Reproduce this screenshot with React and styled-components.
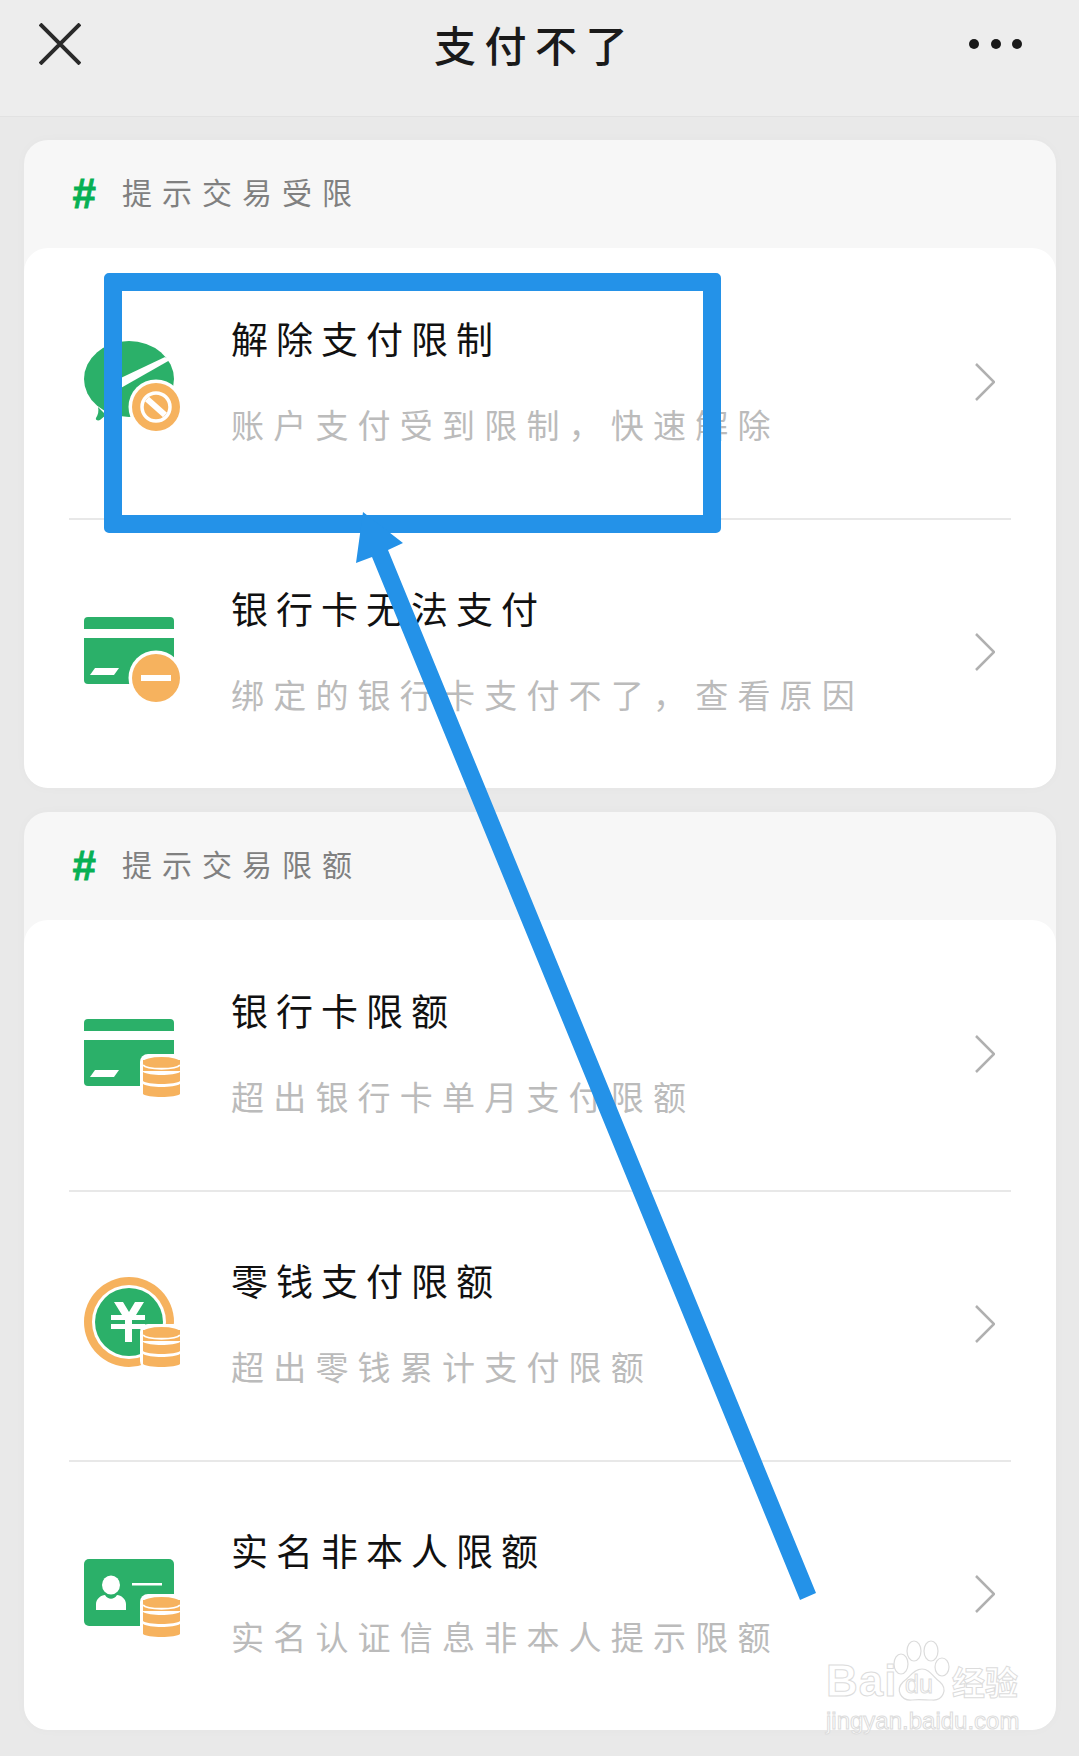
import React from "react";
import styled, { createGlobalStyle } from "styled-components";

const CJK = `"Noto Sans CJK SC", "Noto Sans", sans-serif`;
const GREEN = "#2bb069";
const ORANGE = "#f6b25e";
const BLUE = "#2492e8";

const Global = createGlobalStyle`
  html, body { margin: 0; padding: 0; background: #e9e9e9; }
  * { box-sizing: border-box; }
`;

const Page = styled.div`
  position: relative;
  width: 1079px;
  height: 1756px;
  overflow: hidden;
  background: #e9e9e9;
  font-family: ${CJK};
`;

const Header = styled.header`
  height: 117px;
  padding: 0 56px 29px 39px;
  display: flex;
  align-items: center;
  justify-content: space-between;
  background: #ededed;
  border-bottom: 1px solid #e2e2e2;
`;

const HeaderTitle = styled.h1`
  margin: 0 0 0 20px;
  font-size: 42px;
  line-height: 54px;
  font-weight: 500;
  letter-spacing: 8.5px;
  color: #1a1a1a;
`;

const Content = styled.main`
  padding: 23px 23px 0 24px;
  display: flex;
  flex-direction: column;
  gap: 24px;
`;

const Card = styled.section`
  background: #f7f7f7;
  border-radius: 24px;
  box-shadow: 0 0 12px rgba(0, 0, 0, 0.025);
  overflow: hidden;
`;

const SectionHead = styled.div`
  height: 108px;
  padding-left: 48px;
  display: flex;
  align-items: center;
`;

const Hash = styled.span`
  width: 50px;
  font-family: "Liberation Sans", sans-serif;
  font-size: 42px;
  font-weight: 700;
  font-style: italic;
  color: #07b053;
  -webkit-text-stroke: 0.8px #07b053;
`;

const SectionTitle = styled.span`
  padding-bottom: 6px;
  font-size: 30px;
  letter-spacing: 10px;
  color: #808080;
`;

const Rows = styled.div`
  background: #fff;
  border-radius: 24px;
`;

const Row = styled.div`
  height: 270px;
  margin: 0 45px;
  padding: ${(p) => (p.$first ? "0" : "0 0 2px")};
  padding-left: 13px;
  padding-right: 16px;
  display: flex;
  align-items: center;
  border-top: ${(p) => (p.$first ? "none" : "2px solid #e8e8e8")};
`;

const IconSvg = styled.svg`
  flex: none;
  width: 100px;
  height: 100px;
  display: block;
`;

const RowText = styled.div`
  flex: 1;
  margin-left: 49px;
  display: flex;
  flex-direction: column;
  gap: 40px;
  padding-bottom: 4px;
`;

const RowTitle = styled.div`
  font-size: 37px;
  line-height: 46px;
  letter-spacing: 8px;
  color: #111;
`;

const RowSub = styled.div`
  font-size: 33px;
  line-height: 46px;
  letter-spacing: 9.2px;
  color: #bbb;
`;

const Chevron = styled.svg`
  flex: none;
  width: 20px;
  height: 38px;
  margin-bottom: 2px;
  display: block;
`;

const Highlight = styled.div`
  position: absolute;
  left: 104px;
  top: 273px;
  width: 617px;
  height: 260px;
  border: 18px solid ${BLUE};
  border-radius: 5px;
`;

const ArrowSvg = styled.svg`
  position: absolute;
  left: 340px;
  top: 500px;
  width: 490px;
  height: 1110px;
`;

const Watermark = styled.div`
  position: absolute;
  left: 826px;
  top: 1640px;
  width: 200px;
  font-family: "Liberation Sans", sans-serif;
  color: rgba(255, 255, 255, 0.9);
  -webkit-text-stroke: 1px #dcdcdc;
`;

const MarkLine = styled.div`
  display: flex;
  align-items: flex-end;
  height: 62px;
`;

const MarkBai = styled.span`
  font-size: 44px;
  line-height: 42px;
  font-weight: 700;
  width: 66px;
  letter-spacing: 1px;
`;

const MarkPaw = styled.div`
  position: relative;
  width: 60px;
  height: 62px;
  flex: none;
`;

const MarkDu = styled.span`
  position: absolute;
  left: 13px;
  bottom: 4px;
  font-size: 25px;
  line-height: 28px;
`;

const MarkCn = styled.span`
  font-family: ${CJK};
  font-size: 33px;
  line-height: 42px;
  font-weight: 700;
`;

const MarkUrl = styled.div`
  margin-top: 6px;
  font-size: 24px;
  line-height: 26px;
  white-space: nowrap;
`;

const Coins = ({ y }) => (
  <g>
    <rect x="58" y={y - 3} width="42" height="45" rx="8" fill="#fff" />
    <rect x="61" y={y + 3} width="37" height="11" fill={ORANGE} />
    <ellipse cx="79.5" cy={y + 5} rx="18.5" ry="5" fill={ORANGE} />
    <path d={`M61 ${y + 8}c4 5 33 5 37 0`} fill="none" stroke="#fff" strokeWidth="2" />
    <path d={`M61 ${y + 15}v9c4 4 33 4 37 0v-9c-6 4-31 4-37 0z`} fill={ORANGE} />
    <path d={`M61 ${y + 27}v10c4 4 33 4 37 0v-10c-6 4-31 4-37 0z`} fill={ORANGE} />
  </g>
);

const Badge = ({ cy, children }) => (
  <g>
    <circle cx="74" cy={cy} r="27.5" fill="#fff" />
    <circle cx="74" cy={cy} r="24" fill={ORANGE} />
    {children}
  </g>
);

const CardShape = () => (
  <g fill={GREEN}>
    <path d="M2 26v-8a4 4 0 0 1 4-4h82a4 4 0 0 1 4 4v8z" />
    <path d="M2 35h90v46H6a4 4 0 0 1-4-4z" />
    <path d="M13 65h24l-5 7H8z" fill="#fff" />
  </g>
);

const BubbleIcon = () => (
  <IconSvg viewBox="0 0 100 100">
    <ellipse cx="47" cy="46" rx="45" ry="38" fill={GREEN} />
    <path d="M16 74c1 4 0 8-2 11-1 2 2 3 4 2l6-5z" fill={GREEN} />
    <path d="M83 24l5 3-58 33-6-8z" fill="#fff" />
    <Badge cy="74">
      <circle cx="74" cy="74" r="14" fill="none" stroke="#fff" strokeWidth="3.5" />
      <path d="M65 66l18 16" stroke="#fff" strokeWidth="6" />
    </Badge>
  </IconSvg>
);

const MinusCardIcon = () => (
  <IconSvg viewBox="0 0 100 100">
    <CardShape />
    <Badge cy="75">
      <rect x="59" y="72" width="30" height="6" fill="#fff" />
    </Badge>
  </IconSvg>
);

const CoinCardIcon = () => (
  <IconSvg viewBox="0 0 100 100">
    <CardShape />
    <Coins y={52} />
  </IconSvg>
);

const YenIcon = () => (
  <IconSvg viewBox="0 0 100 100">
    <circle cx="47" cy="47" r="45" fill={ORANGE} />
    <circle cx="47" cy="47" r="37" fill="#fff" />
    <circle cx="47" cy="47" r="34" fill={GREEN} />
    <path
      d="M32 27h9l6 10 6-10h9l-8 13h9v5H50v4h13v5H50v13h-7V54H29v-5h14v-4H29v-5h11z"
      fill="#fff"
    />
    <Coins y={52} />
  </IconSvg>
);

const PersonIcon = () => (
  <IconSvg viewBox="0 0 100 100">
    <rect x="2" y="14" width="90" height="67" rx="5" fill={GREEN} />
    <ellipse cx="29" cy="40" rx="9" ry="9.5" fill="#fff" />
    <path d="M14 65v-6c0-5 5-9 9-9 3 5 9 5 12 0 4 0 9 4 9 9v6z" fill="#fff" />
    <rect x="50" y="38" width="30" height="2.5" fill="#fff" />
    <Coins y={52} />
  </IconSvg>
);

const sections = [
  {
    title: "提示交易受限",
    rows: [
      { icon: BubbleIcon, title: "解除支付限制", sub: "账户支付受到限制，快速解除" },
      { icon: MinusCardIcon, title: "银行卡无法支付", sub: "绑定的银行卡支付不了，查看原因" },
    ],
  },
  {
    title: "提示交易限额",
    rows: [
      { icon: CoinCardIcon, title: "银行卡限额", sub: "超出银行卡单月支付限额" },
      { icon: YenIcon, title: "零钱支付限额", sub: "超出零钱累计支付限额" },
      { icon: PersonIcon, title: "实名非本人限额", sub: "实名认证信息非本人提示限额" },
    ],
  },
];

export default function App() {
  return (
    <Page>
      <Global />
      <Header>
        <svg width="42" height="42" viewBox="0 0 42 42">
          <path d="M1 1l40 40M41 1L1 41" stroke="#2a2a2a" strokeWidth="4" fill="none" />
        </svg>
        <HeaderTitle>支付不了</HeaderTitle>
        <svg width="54" height="12" viewBox="0 0 54 12">
          <circle cx="5" cy="6" r="5" fill="#1a1a1a" />
          <circle cx="27" cy="6" r="5" fill="#1a1a1a" />
          <circle cx="48" cy="6" r="5" fill="#1a1a1a" />
        </svg>
      </Header>
      <Content>
        {sections.map((s) => (
          <Card key={s.title}>
            <SectionHead>
              <Hash>#</Hash>
              <SectionTitle>{s.title}</SectionTitle>
            </SectionHead>
            <Rows>
              {s.rows.map((r, i) => (
                <Row key={r.title} $first={i === 0}>
                  <r.icon />
                  <RowText>
                    <RowTitle>{r.title}</RowTitle>
                    <RowSub>{r.sub}</RowSub>
                  </RowText>
                  <Chevron viewBox="0 0 20 38">
                    <path d="M1 1l18 18L1 37" fill="none" stroke="#b0b0b0" strokeWidth="2.5" />
                  </Chevron>
                </Row>
              ))}
            </Rows>
          </Card>
        ))}
      </Content>
      <Highlight />
      <ArrowSvg viewBox="340 500 490 1110">
        <polygon points="363,512 403,543 388,550 816,1593 800,1600 372,557 356,563" fill={BLUE} />
      </ArrowSvg>
      <Watermark>
        <MarkLine>
          <MarkBai>Bai</MarkBai>
          <MarkPaw>
            <svg width="60" height="62" viewBox="0 0 60 62">
              <g fill="rgba(255,255,255,.9)" stroke="#dcdcdc" strokeWidth="1.2">
                <ellipse cx="9" cy="24" rx="7" ry="10" />
                <ellipse cx="22" cy="11" rx="7" ry="10" />
                <ellipse cx="39" cy="11" rx="7" ry="10" />
                <ellipse cx="50" cy="27" rx="7" ry="9" />
                <path d="M30 29c8 0 11 8 18 13 8 7 3 19-8 18-6 0-14-1-20 0C9 61 3 50 11 42c7-5 11-13 19-13z" />
              </g>
            </svg>
            <MarkDu>du</MarkDu>
          </MarkPaw>
          <MarkCn>经验</MarkCn>
        </MarkLine>
        <MarkUrl>jingyan.baidu.com</MarkUrl>
      </Watermark>
    </Page>
  );
}
